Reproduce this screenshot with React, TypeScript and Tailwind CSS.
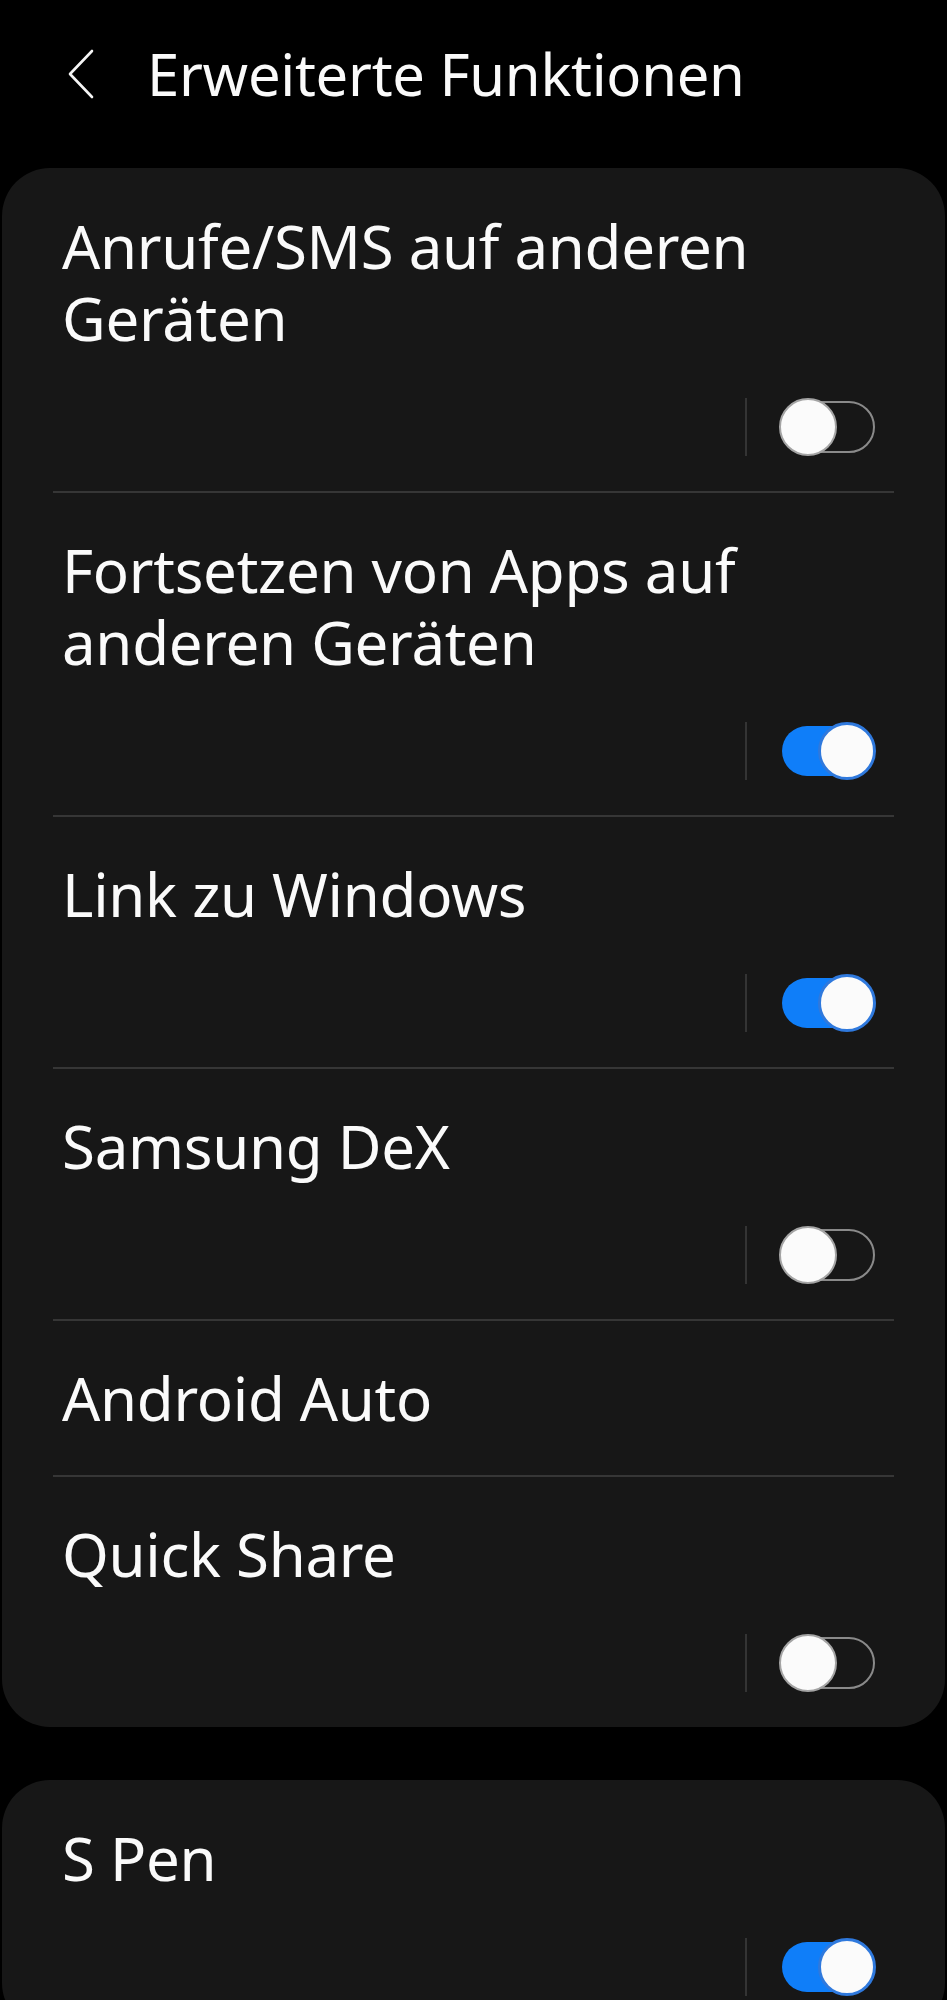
import React from "react";

type Item = { label: string; toggle?: boolean | null };

const group1: Item[] = [
  { label: "Anrufe/SMS auf anderen Geräten", toggle: false },
  { label: "Fortsetzen von Apps auf anderen Geräten", toggle: true },
  { label: "Link zu Windows", toggle: true },
  { label: "Samsung DeX", toggle: false },
  { label: "Android Auto", toggle: null },
  { label: "Quick Share", toggle: false },
];

const group2: Item[] = [{ label: "S Pen", toggle: true }];

function Toggle({ on }: { on: boolean }) {
  return (
    <div className="relative w-[97px] h-[58px] shrink-0">
      <div
        className={
          on
            ? "absolute left-[3px] right-[1px] top-[4px] h-[50px] rounded-full bg-[#0f7ef9]"
            : "absolute left-[6px] right-[1px] top-[3px] h-[52px] rounded-full border-[2.5px] border-[#8a8a8a] bg-[#171717]"
        }
      />
      <div
        className={
          on
            ? "absolute right-0 top-0 w-[58px] h-[58px] rounded-full bg-[#fbfbfb] border-[3px] border-[#2f79dd]"
            : "absolute left-0 top-0 w-[58px] h-[58px] rounded-full bg-[#fbfbfb] border-[2.5px] border-[#a4a4a4]"
        }
      />
    </div>
  );
}

function Row({ item, first }: { item: Item; first: boolean }) {
  const hasToggle = item.toggle !== null && item.toggle !== undefined;
  return (
    <div
      className={
        (first ? "pt-[42px] " : "pt-[41px] ") +
        (hasToggle ? "pb-[35px]" : "pb-[41px]")
      }
    >
      <div className="pl-[60px] pr-[80px] text-[60px] leading-[72px] tracking-[-0.3px] text-[#fafafa]">
        {item.label}
      </div>
      {hasToggle && (
        <div className="mt-[44px] h-[58px] flex items-center justify-end pr-[69px]">
          <div className="w-[2px] h-[58px] bg-[#343434] mr-[32px]" />
          <Toggle on={!!item.toggle} />
        </div>
      )}
    </div>
  );
}

function Card({ items }: { items: Item[] }) {
  return (
    <div className="mx-[2px] rounded-[48px] bg-[#171717]">
      {items.map((it, i) => (
        <div key={i}>
          {i > 0 && <div className="mx-[51px] h-[2px] bg-[#363636]" />}
          <Row item={it} first={i === 0} />
        </div>
      ))}
    </div>
  );
}

export default function App() {
  return (
    <div
      className="min-h-screen w-full bg-black overflow-hidden"
      style={{ fontFamily: '"Noto Sans", "Open Sans", sans-serif' }}
    >
      <div className="h-[168px] pt-[38px]">
        <div className="h-[72px] flex items-center pl-[67px]">
          <svg width="28" height="50" viewBox="0 0 28 50" fill="none">
            <path
              d="M25 2 L3 25 L25 48"
              stroke="#f5f5f5"
              strokeWidth="2.6"
              strokeLinecap="round"
              strokeLinejoin="round"
            />
          </svg>
          <div className="ml-[52px] text-[58px] leading-[72px] tracking-[-0.3px] text-[#fafafa]">
            Erweiterte Funktionen
          </div>
        </div>
      </div>
      <Card items={group1} />
      <div className="h-[53px]" />
      <Card items={group2} />
    </div>
  );
}
